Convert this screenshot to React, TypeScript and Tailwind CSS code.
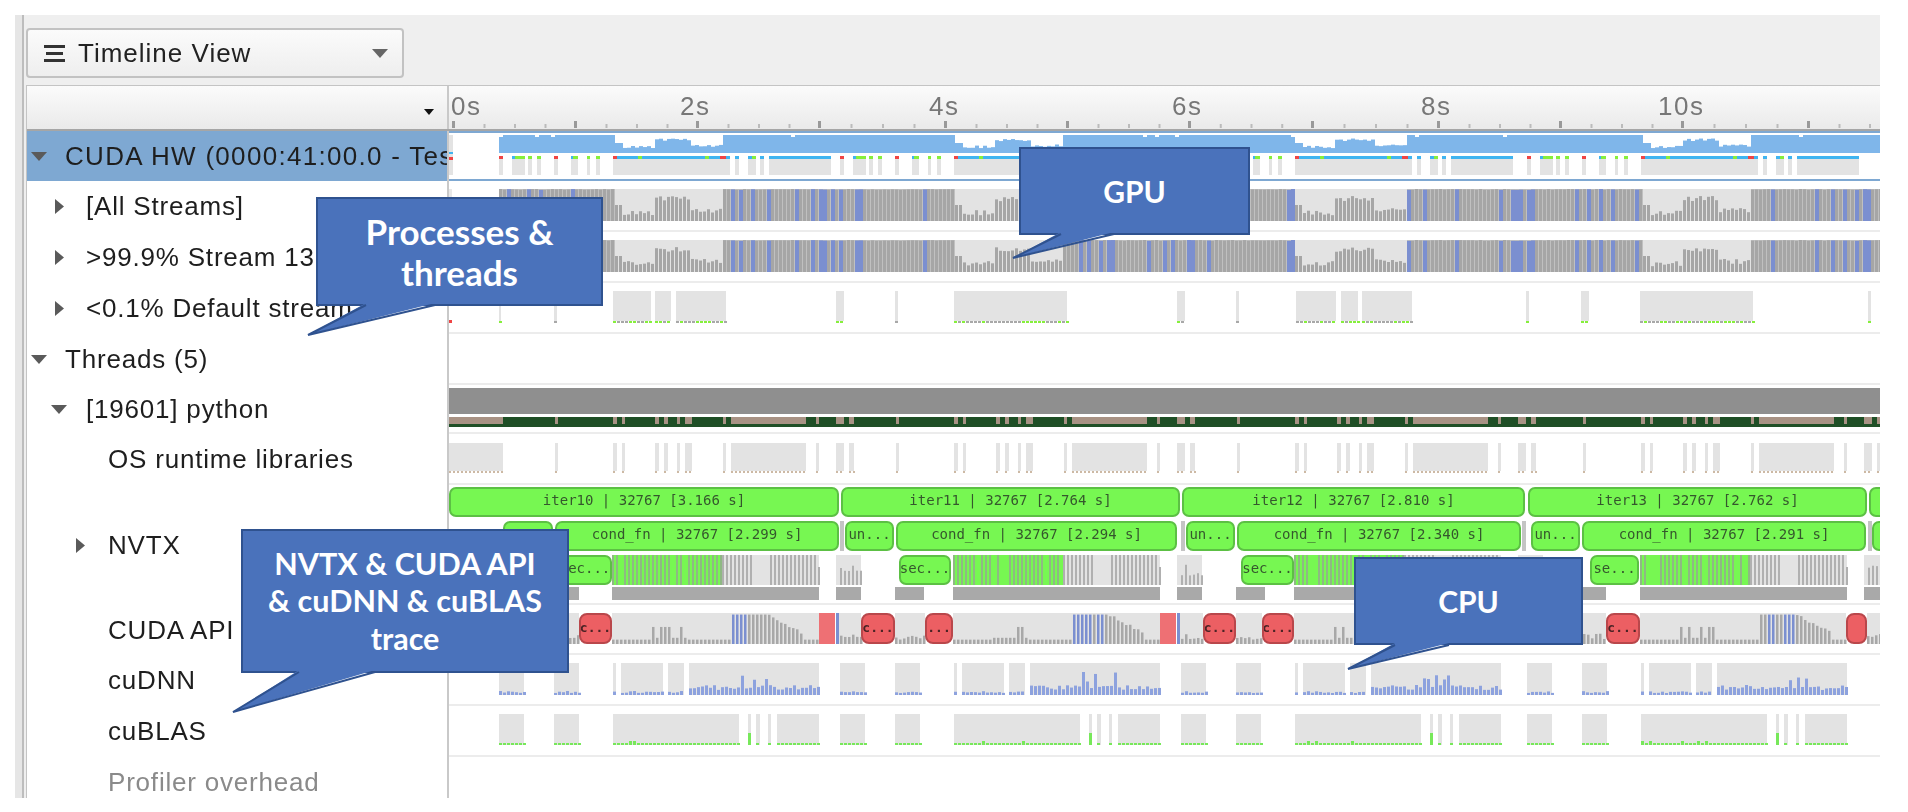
import type { ReactNode } from "react";

const SHIFTS = [0, 341, 682, 1028];
const DIP = 612;
const DIP_LEN = 110;

const rnd = (i: number) => {
  const v = Math.sin(i * 12.9898) * 43758.5453;
  return v - Math.floor(v);
};

const shifted = (blocks: number[][]) =>
  SHIFTS.flatMap((s) => blocks.map(([a, b]) => [a + s, b + s]));

const dipT = (x: number) => {
  for (const s of SHIFTS) {
    const t = x - (DIP + s);
    if (t >= 0 && t < DIP_LEN) return t;
  }
  return null;
};

const dipProfile = (t: number, seed: number) => {
  const j = rnd(seed) * 0.16;
  if (t < 8) return 0.5;
  if (t < 40) return 0.18 + j;
  if (t < 78) return 0.62 + j;
  return 0.25 + j;
};

const GPU_BLOCKS = [[499, 503], [512, 525], [528, 532], [537, 541], [554, 558], [571, 578], [587, 590], [596, 600], [613, 730], [735, 739], [748, 756], [760, 764], [769, 831]];
const GPU_MARKS: [number, number, string][] = [
  [499, 503, "#ef4444"], [512, 515, "#40b4f0"], [515, 525, "#86ef3c"], [528, 532, "#86ef3c"], [537, 541, "#86ef3c"],
  [554, 558, "#ef4444"], [571, 573, "#40b4f0"], [573, 578, "#86ef3c"], [587, 590, "#86ef3c"], [596, 600, "#86ef3c"],
  [613, 617, "#ef4444"], [617, 730, "#40b4f0"], [638, 642, "#86ef3c"], [705, 709, "#86ef3c"], [720, 726, "#ef4444"],
  [735, 739, "#40b4f0"], [748, 752, "#40b4f0"], [752, 756, "#86ef3c"], [760, 764, "#40b4f0"], [769, 831, "#40b4f0"],
];
const DEFAULT_BLOCKS = [[499, 501], [554, 557], [613, 651], [655, 671], [676, 726], [836, 844], [895, 898], [954, 1067], [1177, 1185], [1236, 1239], [1296, 1336], [1341, 1358], [1362, 1412], [1526, 1529], [1581, 1589], [1640, 1753], [1868, 1871]];
const OS_BLOCKS = [[555, 558], [613, 617], [622, 625], [655, 659], [664, 668], [677, 680], [685, 692], [723, 726], [731, 806], [816, 819], [836, 844], [849, 854]];
const DNN_BLOCKS = [[499, 524], [554, 579], [613, 616], [621, 663], [668, 684], [689, 819]];
const BLAS_BLOCKS = [[499, 524], [554, 579], [613, 739], [748, 751], [756, 760], [768, 771], [777, 819]];
const API_BG = [[545, 579], [612, 819], [836, 861], [895, 925], [953, 1160], [1177, 1203], [1236, 1262], [1294, 1500], [1583, 1606], [1640, 1846], [1867, 1880]];
const MAJOR_TICKS = [453, 575, 697, 819, 945, 1067, 1189, 1312, 1438, 1560, 1682, 1808];
const TIME_LABELS = [[451, "0s"], [680, "2s"], [929, "4s"], [1172, "6s"], [1421, "8s"], [1658, "10s"]] as const;

function Lane({ top, h, children }: { top: number; h: number; children?: ReactNode }) {
  return (
    <svg viewBox={`449 ${top} 1431 ${h}`} width={1431} height={h} className="block">
      {children}
    </svg>
  );
}

function Blocks({ list, y, h, fill = "#e3e3e3" }: { list: number[][]; y: number; h: number; fill?: string }) {
  return (
    <>
      {list.map(([a, b], i) => (
        <rect key={i} x={a} y={y} width={b - a} height={h} fill={fill} />
      ))}
    </>
  );
}

function StreamChart({ top, bottom, salt }: { top: number; bottom: number; salt: number }) {
  const bars = [];
  const H = bottom - top;
  for (let x = 499; x < 1880; x += 4) {
    const t = dipT(x);
    const h = t === null ? 0.97 + rnd(x) * 0.03 : dipProfile(t, x + salt);
    const blue = t === null && rnd(x * 3) > 0.78;
    bars.push(
      <g key={x}>
        {t === null && <rect x={x} y={top} width={4} height={H} fill="#c0c0c0" />}
        <rect x={x} y={bottom - h * H} width={blue ? 4 : 3} height={h * H} fill={blue ? "#7b8fd0" : "#a6a6a6"} />
      </g>,
    );
  }
  return (
    <>
      <rect x={449} y={top} width={3} height={H} fill="#e8e8e8" />
      <rect x={499} y={top} width={1381} height={H} fill="#e3e3e3" />
      {bars}
    </>
  );
}

function GpuLane() {
  const area = [];
  for (let x = 499; x < 1880; x += 4) {
    const t = dipT(x);
    const y = t === null ? (rnd(x) > 0.97 ? 137 : 135) : 153 - dipProfile(t, x) * 16 - 2;
    area.push(<rect key={x} x={x} y={y} width={4} height={153 - y} fill="#7fb6ea" />);
  }
  return (
    <Lane top={131} h={50}>
      <rect x={449} y={131} width={1431} height={2} fill="#7ea8d2" />
      <rect x={449} y={179} width={1431} height={2} fill="#7ea8d2" />
      <rect x={449} y={135} width={4} height={40} fill="#e3e3e3" />
      <rect x={449} y={152} width={4} height={2} fill="#40b4f0" />
      <rect x={449} y={157} width={4} height={3} fill="#ef4444" />
      {area}
      <Blocks list={shifted(GPU_BLOCKS)} y={159} h={16} />
      {SHIFTS.flatMap((s) =>
        GPU_MARKS.map(([a, b, c], i) => <rect key={`${s}-${i}`} x={a + s} y={156} width={b - a} height={3} fill={c} />),
      )}
    </Lane>
  );
}

function DefaultLane() {
  const dots = [];
  for (const [a, b] of DEFAULT_BLOCKS) {
    for (let x = a; x < b; x += 4) {
      dots.push(<rect key={x} x={x} y={321} width={3} height={2} fill={rnd(x) > 0.55 ? "#86ef3c" : "#a8a8a8"} />);
    }
  }
  return (
    <Lane top={283} h={49}>
      <rect x={449} y={320} width={3} height={3} fill="#ef4444" />
      <Blocks list={DEFAULT_BLOCKS} y={291} h={30} />
      {dots}
    </Lane>
  );
}

function PythonLane() {
  const blocks = [[449, 503], ...shifted(OS_BLOCKS)];
  return (
    <Lane top={385} h={47}>
      <rect x={449} y={388} width={1431} height={26} fill="#8f8f8f" />
      <rect x={449} y={417} width={1431} height={10} fill="#1f4f26" />
      <Blocks list={blocks} y={417} h={7} fill="#a89284" />
    </Lane>
  );
}

function OsLane() {
  const blocks = [[449, 503], ...shifted(OS_BLOCKS)];
  const dots = [];
  for (const [a, b] of blocks) {
    for (let x = a; x < b; x += 4) {
      dots.push(<rect key={x} x={x} y={471} width={2} height={2} fill="#cdb9a4" />);
    }
  }
  return (
    <Lane top={434} h={49}>
      <Blocks list={blocks} y={443} h={28} />
      {dots}
    </Lane>
  );
}

function NvtxStripes() {
  const out = [];
  for (const s of SHIFTS) {
    const g0 = DIP + s;
    out.push(<rect key={`g${s}`} x={g0} y={555} width={110} height={30} fill="#77f752" />);
    for (let x = g0; x < g0 + 110; x += 4) {
      if (rnd(x) > 0.2) out.push(<rect key={`gs${x}`} x={x} y={555} width={2} height={30} fill="#8fb884" />);
    }
    out.push(<rect key={`b${s}`} x={g0 + 110} y={555} width={97} height={30} fill="#e3e3e3" />);
    for (let x = g0 + 110; x < g0 + 207; x += 4) {
      const t = x - g0 - 110;
      if (t > 28 && t < 46) continue;
      out.push(<rect key={`bs${x}`} x={x} y={t > 92 ? 567 : 555} width={2} height={t > 92 ? 18 : 30} fill="#b0b0b0" />);
    }
    out.push(<rect key={`c${s}`} x={g0 + 224} y={555} width={25} height={30} fill="#e3e3e3" />);
    for (let x = g0 + 228; x < g0 + 249; x += 4) {
      const h = 8 + rnd(x) * 14;
      out.push(<rect key={`cs${x}`} x={x} y={585 - h} width={2} height={h} fill="#b0b0b0" />);
    }
    out.push(<rect key={`d${s}`} x={g0} y={587} width={207} height={13} fill="#a9a9a9" />);
    out.push(<rect key={`e${s}`} x={g0 + 224} y={587} width={25} height={13} fill="#a9a9a9" />);
    out.push(<rect key={`f${s}`} x={g0 + 283} y={587} width={29} height={13} fill="#a9a9a9" />);
    out.push(<rect key={`h${s}`} x={g0 + 228} y={521} width={4} height={30} fill="#c4c4c4" />);
  }
  return (
    <Lane top={485} h={118}>
      <rect x={545} y={587} width={34} height={13} fill="#a9a9a9" />
      {out}
    </Lane>
  );
}

const apiHeight = (t: number, x: number) => {
  if (t < 40) return 0.14;
  if (t < 75) return rnd(x) > 0.55 ? 0.55 : 0.2;
  if (t < 120) return 0.14;
  if (t < 155) return 0.95;
  if (t < 190) return 0.9 - ((t - 155) / 35) * 0.6 + rnd(x) * 0.1;
  return 0.14;
};

function ApiLane() {
  const bars = [];
  for (const [a, b] of API_BG) {
    const shift = [...SHIFTS].reverse().find((s) => a >= DIP + s);
    for (let x = a; x < b; x += 4) {
      const long = b - a > 150 && shift !== undefined;
      const t = x - DIP - (shift ?? 0);
      const h = long ? apiHeight(t, x) : 0.14 + rnd(x) * 0.2;
      const blue = long && t >= 120 && t < 155 && rnd(x) > 0.45;
      bars.push(<rect key={x} x={x} y={644 - h * 31} width={2.5} height={h * 31} fill={blue ? "#7b8fd0" : "#a8a8a8"} />);
    }
  }
  return (
    <Lane top={605} h={48}>
      <Blocks list={API_BG} y={613} h={31} />
      {bars}
      {[819, 1160, 1501].map((x) => (
        <g key={x}>
          <rect x={x} y={613} width={16} height={31} fill="#ee7074" />
          <rect x={x + 17} y={613} width={3} height={31} fill="#7b8fd0" />
        </g>
      ))}
    </Lane>
  );
}

function DnnLane() {
  const blocks = shifted(DNN_BLOCKS);
  const bars = [];
  for (const [a, b] of blocks) {
    for (let x = a; x < b; x += 4) {
      const t = x - a;
      let h = 2 + rnd(x) * 2;
      if (b - a > 100) {
        h = 5 + rnd(x) * 5;
        if (t > 48 && t < 90 && rnd(x * 7) > 0.6) h = 12 + rnd(x) * 12;
      }
      bars.push(<rect key={x} x={x} y={695 - h} width={3} height={h} fill="#8da2de" />);
    }
  }
  return (
    <Lane top={655} h={49}>
      <Blocks list={blocks} y={663} h={32} />
      {bars}
    </Lane>
  );
}

function BlasLane() {
  const blocks = shifted(BLAS_BLOCKS);
  const bars = [];
  for (const [a, b] of blocks) {
    for (let x = a; x < b; x += 4) {
      const h = b - a > 100 && x - a < 70 && rnd(x) > 0.7 ? 4 : 2;
      bars.push(<rect key={x} x={x} y={745 - h} width={3} height={h} fill="#77e85a" />);
    }
  }
  return (
    <Lane top={706} h={49}>
      <Blocks list={blocks} y={714} h={31} />
      {bars}
      {SHIFTS.map((s) => (
        <rect key={s} x={748 + s} y={733} width={3} height={12} fill="#77e85a" />
      ))}
    </Lane>
  );
}

const GREEN_PILLS = [
  { x: 449, w: 390, y: 2, label: "iter10 | 32767 [3.166 s]" },
  { x: 841, w: 339, y: 2, label: "iter11 | 32767 [2.764 s]" },
  { x: 1182, w: 343, y: 2, label: "iter12 | 32767 [2.810 s]" },
  { x: 1528, w: 339, y: 2, label: "iter13 | 32767 [2.762 s]" },
  { x: 1869, w: 30, y: 2, label: "" },
  { x: 503, w: 50, y: 36, label: "" },
  { x: 555, w: 284, y: 36, label: "cond_fn | 32767 [2.299 s]" },
  { x: 845, w: 49, y: 36, label: "un..." },
  { x: 896, w: 281, y: 36, label: "cond_fn | 32767 [2.294 s]" },
  { x: 1186, w: 49, y: 36, label: "un..." },
  { x: 1237, w: 284, y: 36, label: "cond_fn | 32767 [2.340 s]" },
  { x: 1531, w: 49, y: 36, label: "un..." },
  { x: 1582, w: 284, y: 36, label: "cond_fn | 32767 [2.291 s]" },
  { x: 1872, w: 30, y: 36, label: "" },
  { x: 558, w: 54, y: 70, label: "sec..." },
  { x: 899, w: 52, y: 70, label: "sec..." },
  { x: 1241, w: 53, y: 70, label: "sec..." },
  { x: 1590, w: 49, y: 70, label: "se..." },
];

const RED_PILLS = [
  { x: 579, w: 33, label: "c..." },
  { x: 861, w: 34, label: "c..." },
  { x: 925, w: 28, label: "..." },
  { x: 1203, w: 33, label: "c..." },
  { x: 1262, w: 32, label: "c..." },
  { x: 1606, w: 34, label: "c..." },
  { x: 1846, w: 21, label: "" },
];

function NvtxLane() {
  return (
    <div className="relative h-[118px] overflow-hidden">
      <NvtxStripes />
      {GREEN_PILLS.map((p) => (
        <div
          key={`${p.x}-${p.y}`}
          style={{ left: p.x - 449, top: p.y, width: p.w }}
          className="absolute flex h-[30px] items-center justify-center overflow-hidden whitespace-nowrap rounded-[7px] border-2 border-[#5cc044] bg-[#77f752] pb-[3px] font-['DejaVu_Sans_Mono',monospace] text-[14px] text-[#35572d]"
        >
          {p.label}
        </div>
      ))}
    </div>
  );
}

function ApiRow() {
  return (
    <div className="relative h-[48px] overflow-hidden">
      <ApiLane />
      {RED_PILLS.map((p) => (
        <div
          key={p.x}
          style={{ left: p.x - 449, width: p.w }}
          className="absolute top-[8px] flex h-[31px] items-center justify-center overflow-hidden rounded-[8px] border-2 border-[#b9474b] bg-[#ec5f63] pb-[2px] font-['DejaVu_Sans_Mono',monospace] text-[13px] font-bold text-[#4b2325]"
        >
          {p.label}
        </div>
      ))}
    </div>
  );
}

function Caret({ dir, className }: { dir: "down" | "right"; className?: string }) {
  return dir === "down" ? (
    <svg width="16" height="9" viewBox="0 0 16 9" className={className}>
      <path d="M0 0h16L8 9z" fill="#5a5a5a" />
    </svg>
  ) : (
    <svg width="9" height="15" viewBox="0 0 9 15" className={className}>
      <path d="M0 0l9 7.5L0 15z" fill="#5a5a5a" />
    </svg>
  );
}

const ROWS = [
  { label: "CUDA HW (0000:41:00.0 - Tes", h: "h-[50px]", pad: "pl-[4px] gap-[18px] tracking-[1.3px]", caret: "down", selected: true, line: false, lane: <GpuLane /> },
  { label: "[All Streams]", h: "h-[51px]", pad: "pl-[28px] gap-[22px]", caret: "right", lane: <Lane top={181} h={49}><StreamChart top={189} bottom={221} salt={0} /></Lane> },
  { label: ">99.9% Stream 13", h: "h-[51px]", pad: "pl-[28px] gap-[22px]", caret: "right", lane: <Lane top={232} h={49}><StreamChart top={240} bottom={272} salt={5} /></Lane> },
  { label: "<0.1% Default stream", h: "h-[51px]", pad: "pl-[28px] gap-[22px]", caret: "right", lane: <DefaultLane /> },
  { label: "Threads (5)", h: "h-[51px]", pad: "pl-[4px] gap-[18px]", caret: "down", lane: null },
  { label: "[19601] python", h: "h-[49px]", pad: "pl-[24px] gap-[19px]", caret: "down", lane: <PythonLane /> },
  { label: "OS runtime libraries", h: "h-[51px]", pad: "pl-[81px]", lane: <OsLane /> },
  { label: "NVTX", h: "h-[120px]", pad: "pl-[49px] gap-[23px]", caret: "right", lane: <NvtxLane /> },
  { label: "CUDA API", h: "h-[50px]", pad: "pl-[81px]", lane: <ApiRow /> },
  { label: "cuDNN", h: "h-[51px]", pad: "pl-[81px]", lane: <DnnLane /> },
  { label: "cuBLAS", h: "h-[51px]", pad: "pl-[81px]", lane: <BlasLane /> },
  { label: "Profiler overhead", h: "h-[50px]", pad: "pl-[81px]", muted: true, line: false, lane: null },
];

function Ruler() {
  const minors: number[] = [];
  MAJOR_TICKS.forEach((m, i) => {
    const next = MAJOR_TICKS[i + 1] ?? m + 122;
    for (let k = 1; k < 4; k++) minors.push(m + ((next - m) * k) / 4);
  });
  return (
    <div className="relative h-[45px] flex-1 overflow-hidden">
      {TIME_LABELS.map(([x, t]) => (
        <span key={t} style={{ left: x - 449 }} className="absolute top-[4px] text-[26px] leading-[34px] tracking-[1.5px] text-[#777]">
          {t}
        </span>
      ))}
      <svg viewBox="449 86 1431 45" width={1431} height={45} className="absolute inset-0">
        {MAJOR_TICKS.map((x) => (
          <rect key={x} x={x - 1} y={122} width={3} height={7} fill="#999" />
        ))}
        {minors.map((x) => (
          <rect key={x} x={x} y={125} width={2} height={4} fill="#bbb" />
        ))}
      </svg>
    </div>
  );
}

function Tail({ fill, edge }: { fill: string; edge: string }) {
  return (
    <svg width={1908} height={812} className="absolute left-0 top-0">
      <polygon points={fill} fill="#4a72bb" />
      <polyline points={edge} fill="none" stroke="#2f528f" strokeWidth={2} />
    </svg>
  );
}

const calloutBox =
  "absolute box-border flex flex-col items-center justify-center border-2 border-[#2f528f] bg-[#4a72bb] text-center font-['Lato',sans-serif] font-bold text-white";

export default function App() {
  return (
    <div className="relative h-[812px] w-[1908px] overflow-hidden bg-white pl-[15px] pt-[15px] font-['Liberation_Sans',Arial,sans-serif]">
      <div className="flex h-[783px] w-[1865px] blur-[0.6px]">
        <div className="w-[7px] bg-[#e6e6e6]" />
        <div className="w-[2px] bg-[#bdbdbd]" />
        <div className="flex min-w-0 flex-1 flex-col bg-[#efefef] pl-[2px]">
          <div className="h-[70px] pt-[13px]">
            <button className="flex h-[50px] w-[378px] items-center rounded-[4px] border-2 border-[#c2c2c2] bg-gradient-to-b from-[#fbfbfb] to-[#eeeeee] pl-[16px] pr-[14px]">
              <svg width="21" height="17" viewBox="0 0 21 17">
                <path d="M0 0h21v3H0zM2 7h17v3H2zM0 14h21v3H0z" fill="#333" />
              </svg>
              <span className="ml-[13px] text-[26px] tracking-[1px] text-[#222]">Timeline View</span>
              <svg width="16" height="9" viewBox="0 0 16 9" className="ml-auto">
                <path d="M0 0h16L8 9z" fill="#666" />
              </svg>
            </button>
          </div>
          <div className="min-h-0 flex-1 overflow-hidden border-l border-t border-[#c4c4c4] bg-white">
            <div className="flex border-b-2 border-[#a6a6a6] bg-gradient-to-b from-[#fbfbfb] to-[#eaeaea]">
              <div className="flex h-[43px] w-[422px] items-center justify-end border-r-2 border-[#c9c9c9] pr-[13px] pt-[8px]">
                <svg width="10" height="6" viewBox="0 0 10 6">
                  <path d="M0 0h10L5 6z" fill="#111" />
                </svg>
              </div>
              <div className="h-[43px] flex-1">
                <div className="-mt-[1px]">
                  <Ruler />
                </div>
              </div>
            </div>
            {ROWS.map((r) => (
              <div key={r.label} className={`flex ${r.h}`}>
                <div
                  className={`flex w-[422px] shrink-0 items-center overflow-hidden whitespace-nowrap border-r-2 border-[#c9c9c9] text-[26px] tracking-[0.8px] ${r.pad} ${r.selected ? "bg-[#7ea8d2]" : ""} ${r.muted ? "text-[#8a8a8a]" : "text-[#1e1e1e]"}`}
                >
                  {r.caret && <Caret dir={r.caret as "down" | "right"} className="shrink-0" />}
                  <span>{r.label}</span>
                </div>
                <div className={`min-w-0 flex-1 ${r.line === false ? "" : "border-b-2 border-[#ececec]"}`}>{r.lane}</div>
              </div>
            ))}
          </div>
        </div>
      </div>

      <div className={`${calloutBox} left-[1019px] top-[147px] h-[88px] w-[231px] text-[30px]`}>GPU</div>
      <Tail fill="1061,232 1013,258 1114,232" edge="1061,234 1013,258 1114,234" />

      <div className={`${calloutBox} left-[316px] top-[197px] h-[109px] w-[287px] text-[35px] leading-[41px]`}>
        <span>Processes &amp;</span>
        <span>threads</span>
      </div>
      <Tail fill="366,303 308,335 435,303" edge="366,305 308,335 435,305" />

      <div className={`${calloutBox} left-[241px] top-[529px] h-[144px] w-[328px] text-[30.5px] leading-[37.5px]`}>
        <span>NVTX &amp; CUDA API</span>
        <span>&amp; cuDNN &amp; cuBLAS</span>
        <span>trace</span>
      </div>
      <Tail fill="299,670 233,712 375,670" edge="299,672 233,712 375,672" />

      <div className={`${calloutBox} left-[1354px] top-[557px] h-[88px] w-[229px] text-[30px]`}>CPU</div>
      <Tail fill="1395,643 1348,669 1449,643" edge="1395,645 1348,669 1449,645" />
    </div>
  );
}
